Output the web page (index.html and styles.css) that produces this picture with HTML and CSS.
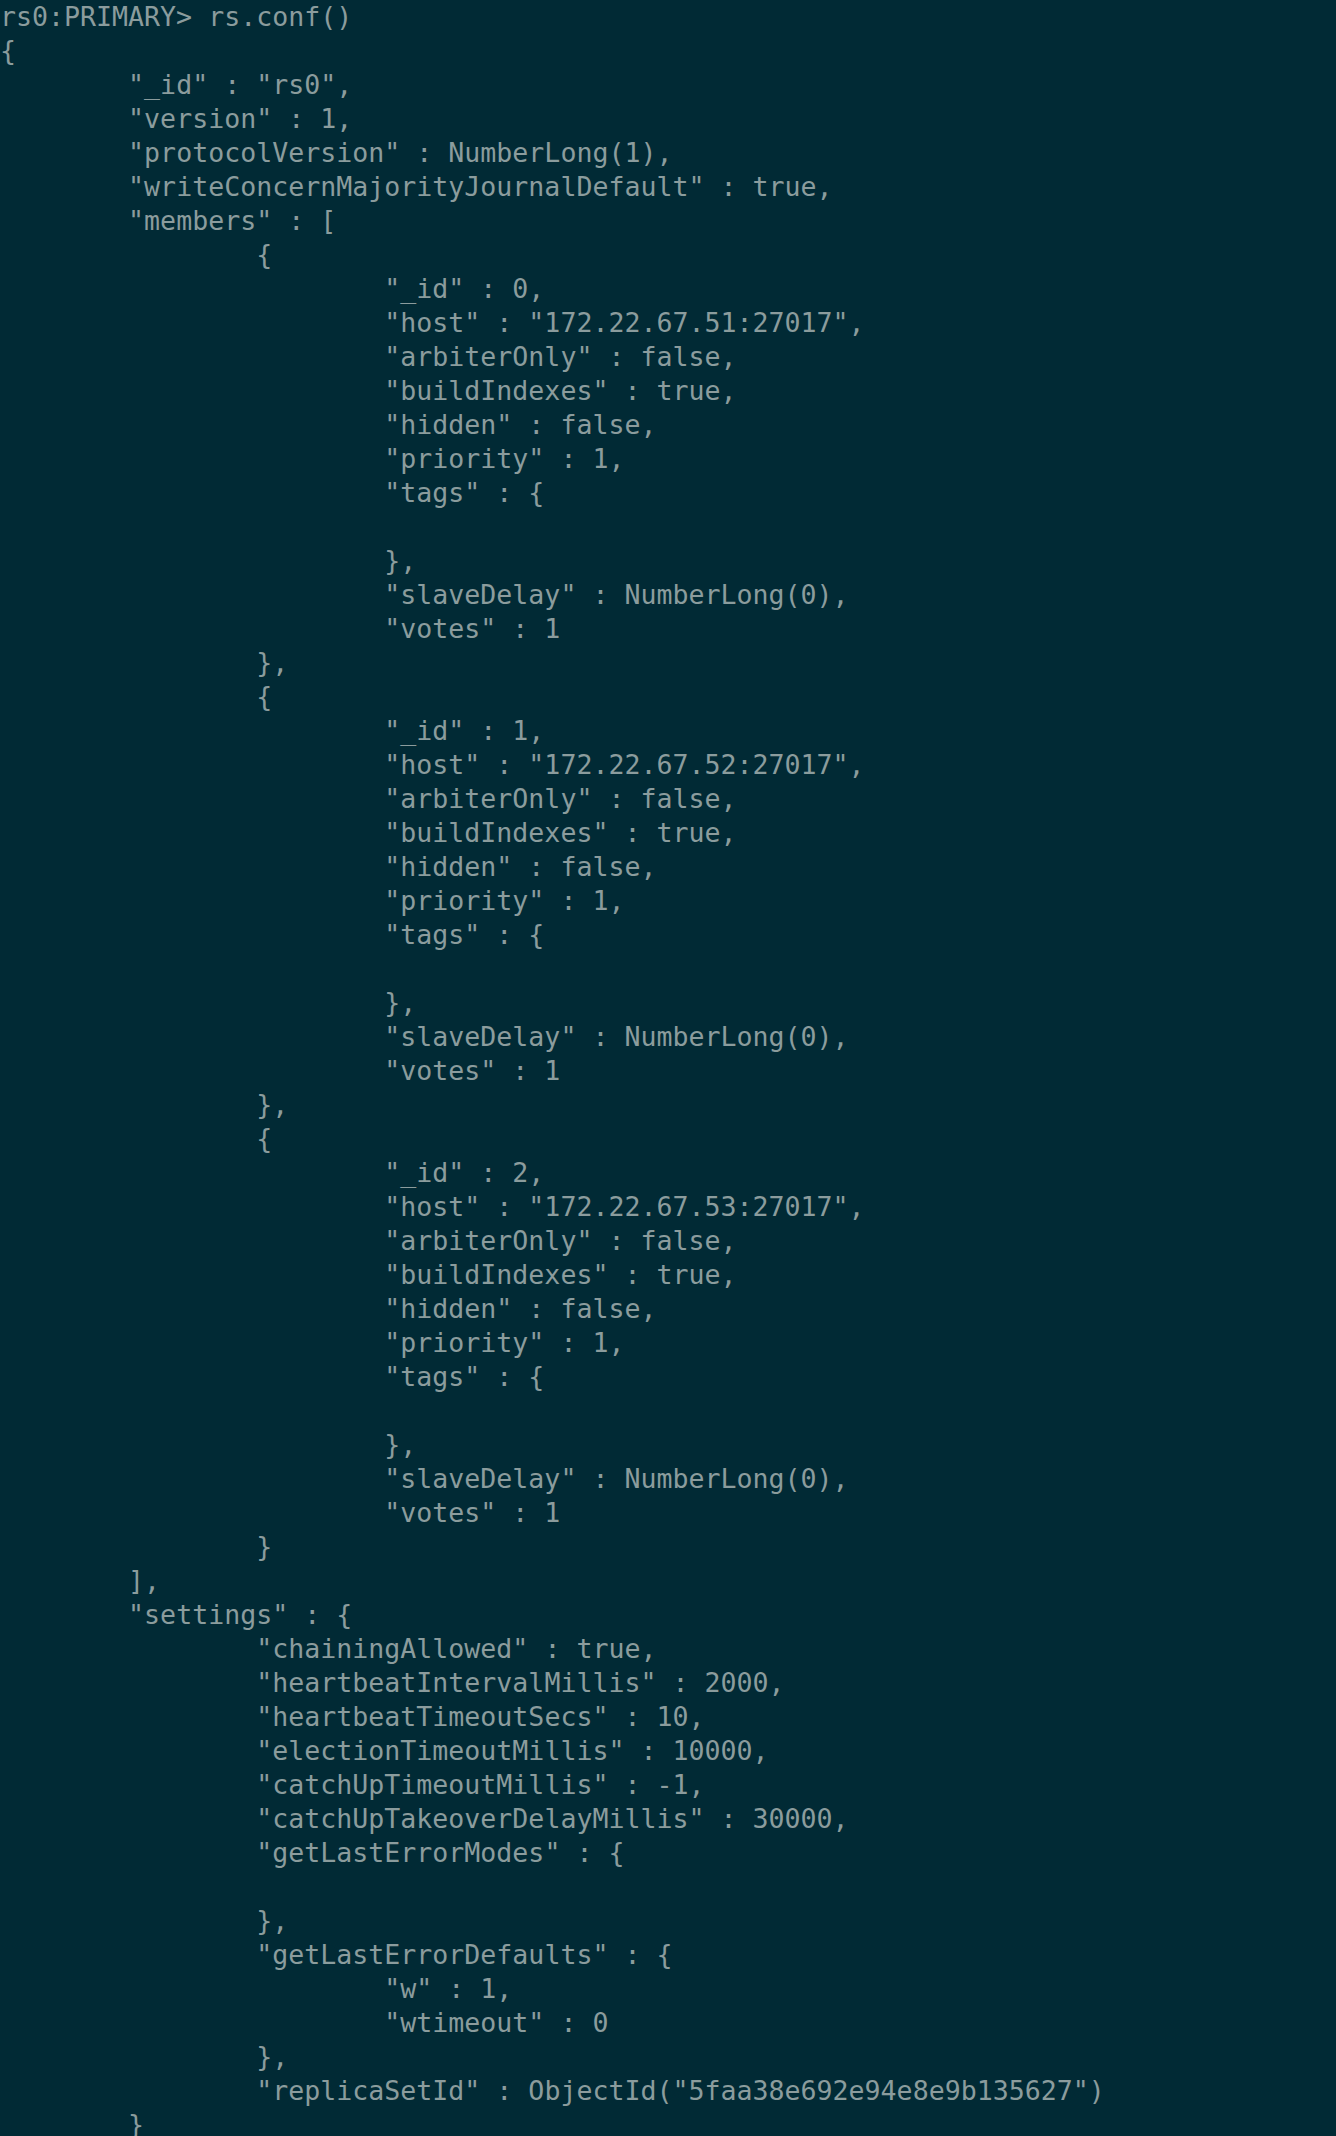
FILE: index.html
```html
<!DOCTYPE html>
<html>
<head>
<meta charset="utf-8">
<link rel="stylesheet" href="styles.css">
</head>
<body>
<pre class="term">rs0:PRIMARY&gt; rs.conf()
{
	"_id" : "rs0",
	"version" : 1,
	"protocolVersion" : NumberLong(1),
	"writeConcernMajorityJournalDefault" : true,
	"members" : [
		{
			"_id" : 0,
			"host" : "172.22.67.51:27017",
			"arbiterOnly" : false,
			"buildIndexes" : true,
			"hidden" : false,
			"priority" : 1,
			"tags" : {

			},
			"slaveDelay" : NumberLong(0),
			"votes" : 1
		},
		{
			"_id" : 1,
			"host" : "172.22.67.52:27017",
			"arbiterOnly" : false,
			"buildIndexes" : true,
			"hidden" : false,
			"priority" : 1,
			"tags" : {

			},
			"slaveDelay" : NumberLong(0),
			"votes" : 1
		},
		{
			"_id" : 2,
			"host" : "172.22.67.53:27017",
			"arbiterOnly" : false,
			"buildIndexes" : true,
			"hidden" : false,
			"priority" : 1,
			"tags" : {

			},
			"slaveDelay" : NumberLong(0),
			"votes" : 1
		}
	],
	"settings" : {
		"chainingAllowed" : true,
		"heartbeatIntervalMillis" : 2000,
		"heartbeatTimeoutSecs" : 10,
		"electionTimeoutMillis" : 10000,
		"catchUpTimeoutMillis" : -1,
		"catchUpTakeoverDelayMillis" : 30000,
		"getLastErrorModes" : {

		},
		"getLastErrorDefaults" : {
			"w" : 1,
			"wtimeout" : 0
		},
		"replicaSetId" : ObjectId("5faa38e692e94e8e9b135627")
	}
}</pre>
</body>
</html>
```
FILE: styles.css
```css
html, body {
  margin: 0;
  padding: 0;
  background: #012a35;
}
body {
  min-height: 2136px;
}
.term {
  margin: 0;
  padding: 0;
  font-family: "DejaVu Sans Mono", monospace;
  font-size: 26.6px;
  line-height: 34px;
  color: #8b9c9d;
  white-space: pre;
  tab-size: 8;
  -moz-tab-size: 8;
}
```
